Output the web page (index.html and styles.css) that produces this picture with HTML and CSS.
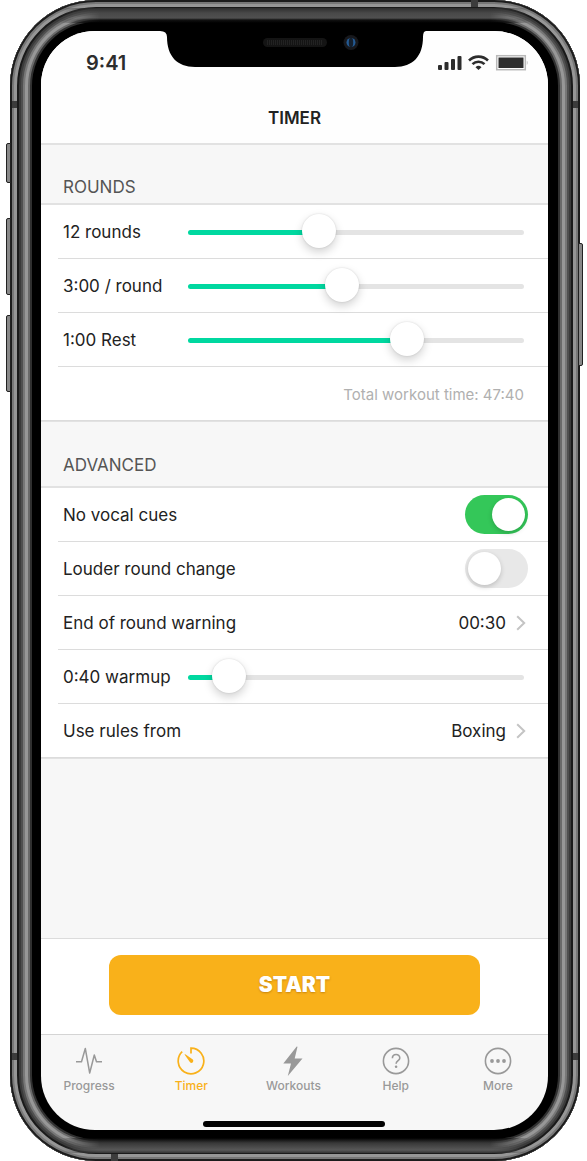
FILE: index.html
```html
<!DOCTYPE html>
<html lang="en">
<head>
<meta charset="utf-8">
<meta name="viewport" content="width=device-width, initial-scale=1">
<title>Timer</title>
<link rel="stylesheet" href="styles.css">
</head>
<body>
<div class="phone">
  <span class="side-button mute"></span>
  <span class="side-button volume-up"></span>
  <span class="side-button volume-down"></span>
  <span class="side-button power"></span>
  <span class="edge edge-top"></span>
  <span class="edge edge-bottom"></span>
  <span class="antenna left-high"></span>
  <span class="antenna left-low"></span>
  <span class="antenna right-high"></span>
  <span class="antenna right-low"></span>
  <span class="antenna top"></span>
  <span class="antenna bottom"></span>

  <div class="screen">
    <svg class="notch" width="258" height="37" viewBox="0 0 258 37" aria-hidden="true">
      <path d="M-6 0H264V0H260Q257 0 257 6C257 25 247 36 229 36H29C11 36 1 25 1 6Q1 0-6 0Z"/>
      <rect x="97" y="7" width="64" height="9" rx="4.500" fill="#141414"/>
      <path d="M101 11.500H157" stroke="#222" stroke-width="5" stroke-dasharray="1 1"/>
      <circle cx="185" cy="11.500" r="7.500" fill="#17181c"/>
      <circle cx="185" cy="11.500" r="4.500" fill="#245b94"/>
      <ellipse cx="185" cy="11.500" rx="2.200" ry="5" fill="#15202e"/>
    </svg>

    <header class="top-bar">
      <div class="status">
        <span class="clock">9:41</span>
        <svg width="90" height="18" viewBox="0 0 90 18" aria-hidden="true">
          <g fill="#2d2d2d">
            <rect x="0" y="11" width="4" height="5" rx="1"/>
            <rect x="6.500" y="8" width="4" height="8" rx="1"/>
            <rect x="13" y="5" width="4" height="11" rx="1"/>
            <rect x="19.500" y="2" width="4" height="14" rx="1"/>
            <path d="M37.500 13.200L40.500 16L43.500 13.200A4.500 4.500 0 0 0 37.500 13.200Z"/>
          </g>
          <g fill="none" stroke="#2d2d2d" stroke-width="2.600">
            <path d="M31 6.500A13.500 13.500 0 0 1 50 6.500"/>
            <path d="M34.500 10.200A8.500 8.500 0 0 1 46.500 10.200"/>
          </g>
          <rect x="58.700" y="1.700" width="28.600" height="14" fill="#fff" stroke="#b9b9b9" stroke-width="1.500"/>
          <rect x="60.500" y="3.500" width="25" height="10.500" fill="#2d2d2d"/>
          <path d="M88.800 6.500Q90.500 8.700 88.800 11Z" fill="#b9b9b9"/>
        </svg>
      </div>
      <h1 class="title">TIMER</h1>
    </header>

    <main class="settings">
      <h2 class="group-title">ROUNDS</h2>
      <div class="list">
        <div class="row slider-row">
          <label for="rounds">12 rounds</label>
          <input class="slider" id="rounds" type="range" min="0" max="1000" value="379" style="--fill: 39%">
        </div>
        <div class="row slider-row">
          <label for="length">3:00 / round</label>
          <input class="slider" id="length" type="range" min="0" max="1000" value="454" style="--fill: 46%">
        </div>
        <div class="row slider-row">
          <label for="rest">1:00 Rest</label>
          <input class="slider" id="rest" type="range" min="0" max="1000" value="669" style="--fill: 65%">
        </div>
        <div class="row total">Total workout time: 47:40</div>
      </div>

      <h2 class="group-title advanced">ADVANCED</h2>
      <div class="list">
        <div class="row toggle-row">
          <label for="vocal">No vocal cues</label>
          <input class="toggle" id="vocal" type="checkbox" role="switch" checked>
        </div>
        <div class="row toggle-row">
          <label for="louder">Louder round change</label>
          <input class="toggle" id="louder" type="checkbox" role="switch">
        </div>
        <button class="row link-row" type="button">
          <span>End of round warning</span>
          <span class="value">00:30</span>
          <svg class="chevron" width="10" height="16" viewBox="0 0 10 16" aria-hidden="true"><path d="M1.200 1.200L8.200 8L1.200 14.800"/></svg>
        </button>
        <div class="row slider-row">
          <label for="warmup">0:40 warmup</label>
          <input class="slider" id="warmup" type="range" min="0" max="1000" value="81" style="--fill: 12%">
        </div>
        <button class="row link-row" type="button">
          <span>Use rules from</span>
          <span class="value">Boxing</span>
          <svg class="chevron" width="10" height="16" viewBox="0 0 10 16" aria-hidden="true"><path d="M1.200 1.200L8.200 8L1.200 14.800"/></svg>
        </button>
      </div>
    </main>

    <div class="action">
      <button class="start" type="button">START</button>
    </div>

    <nav class="tabs">
      <a class="tab" href="#progress">
        <svg width="28" height="28" viewBox="0 0 28 28" aria-hidden="true"><path d="M1 14.800H6.500L10.300 1.500L14.700 26L19.300 8L21.500 14.800H27" stroke-width="1.500" stroke-linejoin="round"/></svg>
        <span>Progress</span>
      </a>
      <a class="tab active" href="#timer" aria-current="page">
        <svg width="28" height="28" viewBox="0 0 28 28" aria-hidden="true"><path d="M14 6.500V1.200A12.800 12.800 0 1 1 5.200 4.700" stroke-width="1.700"/><path class="solid" d="M7.500 7.600Q8 7 8.700 7.600L15.800 12.600A2 2 0 0 1 13.200 15.600Z"/></svg>
        <span>Timer</span>
      </a>
      <a class="tab" href="#workouts">
        <svg width="28" height="30" viewBox="0 0 28 30" aria-hidden="true"><path class="solid" d="M17.700 .5L4.300 17.500H12L8.800 30L23.500 12.500H15.700L18.500 .8Z"/></svg>
        <span>Workouts</span>
      </a>
      <a class="tab" href="#help">
        <svg width="28" height="28" viewBox="0 0 28 28" aria-hidden="true"><circle cx="14" cy="14" r="12.600" stroke-width="1.600"/><path d="M10.400 11.200C10.400 6.300 17.800 6.300 17.800 10.900C17.800 13.700 14.100 13.500 14.100 16.800" stroke-width="1.600"/><circle class="solid" cx="14.100" cy="19.800" r="1.300"/></svg>
        <span>Help</span>
      </a>
      <a class="tab" href="#more">
        <svg width="28" height="28" viewBox="0 0 28 28" aria-hidden="true"><circle cx="14" cy="14" r="12.600" stroke-width="1.600"/><g class="solid"><circle cx="8" cy="14" r="1.900"/><circle cx="14" cy="14" r="1.900"/><circle cx="20" cy="14" r="1.900"/></g></svg>
        <span>More</span>
      </a>
      <span class="home-bar"></span>
    </nav>
  </div>
</div>
</body>
</html>
```
FILE: styles.css
```css
* {
  box-sizing: border-box;
}

body {
  margin: 0;
  min-height: 100vh;
  display: flex;
  padding: 0 7px 0 10px;
  background: #fff;
  color: #222;
  font-family: Inter, "Liberation Sans", sans-serif;
  font-size: 17px;
  line-height: 20px;
}

button {
  font: inherit;
  color: inherit;
  border: 0;
}

/* Phone body: concentric metal rings around the black bezel */
.phone {
  position: relative;
  flex: 1;
  display: flex;
  padding: 31px 32px 31px 31px;
  border-radius: 86px;
  background: #000;
  box-shadow:
    inset 0 0 0 2px #1c1c1c,
    inset 0 0 0 4px #777,
    inset 0 0 0 7px #969696,
    inset 0 0 0 9px #1a1a1a,
    inset 0 0 0 11px #3b3b3b,
    inset 0 0 0 13px #505050,
    inset 0 0 0 15px #777,
    inset 0 0 0 18px #979797,
    inset 0 0 0 20px #6a6a6a,
    inset 0 0 0 22px #303030;
}

.edge {
  position: absolute;
  left: 50px;
  right: 50px;
  height: 15px;
}

.edge-top {
  top: 8px;
  background: linear-gradient(#2e2e2e, #484848 5px, #505050 10px, #111 12px, #000);
  mask-image: linear-gradient(90deg, transparent, #000 40px, #000 calc(100% - 40px), transparent);
}

.edge-bottom {
  bottom: 8px;
  background: linear-gradient(#000, #222 3px, #383838 5px, #585858 12px, #333);
  mask-image: linear-gradient(90deg, transparent, #000 40px, #000 calc(100% - 40px), transparent);
}

.antenna {
  position: absolute;
  width: 5px;
  height: 7px;
  background: #3c3c3c;
}

.left-high, .left-low { left: 2px; }
.right-high, .right-low { right: 2px; }
.left-high, .right-high { top: 101px; }
.left-low, .right-low { bottom: 101px; }
.antenna.top { top: 0; right: 102px; width: 7px; }
.antenna.bottom { bottom: 0; left: 101px; width: 7px; }

.side-button {
  position: absolute;
  left: -4px;
  width: 5px;
  border: 1px solid #222;
  border-radius: 2px 0 0 2px;
  background: #888;
}

.mute { top: 143px; height: 40px; }
.volume-up { top: 218px; height: 77px; }
.volume-down { top: 315px; height: 77px; }
.power {
  top: 243px;
  left: auto;
  right: -3px;
  height: 123px;
  border-radius: 0 2px 2px 0;
}

.screen {
  position: relative;
  flex: 1;
  min-width: 0;
  display: flex;
  flex-direction: column;
  overflow: hidden;
  border-radius: 54px;
  background: #f7f7f7;
}

.notch {
  position: absolute;
  top: 0;
  left: 50%;
  transform: translateX(-50%);
  overflow: visible;
}

/* Status bar and title */
.top-bar {
  background: #fefefe;
  border-bottom: 2px solid #e2e2e2;
}

.status {
  display: flex;
  justify-content: space-between;
  align-items: center;
  height: 64px;
  padding: 0 20px 0 45px;
}

.clock {
  font-size: 20px;
  font-weight: 600;
  color: #2d2d2d;
}

.title {
  margin: 0;
  padding: 13px 0 15px;
  text-align: center;
  font-size: 17px;
  font-weight: 600;
}

/* Settings lists */
.settings {
  flex: 1;
}

.group-title {
  margin: 0;
  padding: 32px 22px 6px;
  color: #555;
  font-size: 17px;
  font-weight: 400;
}

.advanced {
  padding: 33px 22px 11px;
}

.list {
  display: flex;
  flex-direction: column;
  padding-left: 17px;
  background: #fff;
  border-top: 2px solid #e2e2e2;
  border-bottom: 1px solid #e2e2e2;
}

.row {
  display: flex;
  align-items: center;
  height: 54px;
  padding: 0 24px 0 5px;
  border-bottom: 1px solid #dcdcdc;
}

.row:last-child {
  margin-left: -17px;
  padding-left: 22px;
}

.slider-row {
  display: grid;
  grid-template-columns: 125px 1fr;
}

.toggle-row {
  justify-content: space-between;
  padding-right: 20px;
}

.link-row {
  gap: 10px;
  padding-right: 22px;
  background: none;
  text-align: left;
}

.value {
  margin-left: auto;
}

.chevron {
  fill: none;
  stroke: #c4c4c4;
  stroke-width: 2;
}

.total {
  justify-content: flex-end;
  padding-top: 2px;
  color: #b0b0b0;
  font-size: 15px;
}

.slider {
  appearance: none;
  width: 100%;
  height: 34px;
  margin: 2px 0 0;
  background: none;
}

.slider::-webkit-slider-runnable-track {
  height: 5px;
  border-radius: 3px;
  background: linear-gradient(90deg, #00d8a0 var(--fill), #e4e4e4 var(--fill));
}

.slider::-webkit-slider-thumb {
  appearance: none;
  width: 34px;
  height: 34px;
  margin-top: -16px;
  border-radius: 50%;
  background: #fff;
  box-shadow: 0 4px 10px rgba(0, 0, 0, .18), 0 0 2px rgba(0, 0, 0, .14);
}

.toggle {
  appearance: none;
  display: flex;
  width: 63px;
  height: 39px;
  margin: 0;
  padding: 3px;
  border-radius: 20px;
  background: #e8e8e8;
}

.toggle::before {
  content: "";
  width: 33px;
  height: 33px;
  border-radius: 50%;
  background: #fff;
  box-shadow: 0 2px 5px rgba(0, 0, 0, .18);
}

.toggle:checked {
  justify-content: flex-end;
  background: #34c759;
}

/* Start button */
.action {
  padding: 16px 68px 19px;
  background: #fff;
  border-top: 1px solid #dcdcdc;
}

.start {
  display: block;
  width: 100%;
  height: 60px;
  border-radius: 12px;
  background: #f9b11a;
  color: #fff;
  font-size: 21px;
  font-weight: 900;
  text-shadow: 0 1px 2px rgba(140, 80, 0, .45);
}

/* Tab bar: bleeds slightly past the screen edges, which clip it */
.tabs {
  position: relative;
  display: grid;
  grid-template-columns: repeat(5, 1fr);
  height: 96px;
  margin: 0 -1px 0 -3px;
  padding-top: 11px;
  border-top: 1px solid #d4d4d4;
}

.tab {
  display: flex;
  flex-direction: column;
  align-items: center;
  color: #999;
  font-size: 12px;
  font-weight: 500;
  line-height: 16px;
  text-decoration: none;
}

.tab svg {
  height: 30px;
  fill: none;
  stroke: currentColor;
}

.tab .solid {
  fill: currentColor;
  stroke: none;
}

.tab span {
  margin-top: 2px;
}

.tab.active {
  color: #f9b11a;
}

.home-bar {
  position: absolute;
  bottom: 3px;
  left: 50%;
  width: 182px;
  height: 6px;
  border-radius: 3px;
  background: #000;
  transform: translateX(-50%);
}
```
